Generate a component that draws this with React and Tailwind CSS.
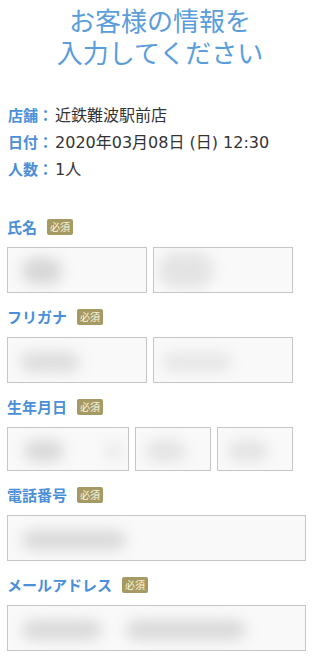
const font = { fontFamily: '"Noto Sans CJK JP", "Noto Sans", sans-serif' }
const valueFont = { fontFamily: '"DejaVu Sans", "Noto Sans CJK JP", sans-serif' }

function Badge() {
  return (
    <span className="ml-[10px] inline-flex h-4 w-[26px] items-center justify-center rounded-[2px] bg-[#a69a64] text-[10px] leading-none text-[#fdf7dc]">
      必須
    </span>
  )
}

function Label({ children }) {
  return (
    <div className="mt-[14px] flex h-5 items-center">
      <span className="text-[15px] font-bold leading-5 text-[#4a8fd8]">{children}</span>
      <Badge />
    </div>
  )
}

// blurred placeholder text inside the boxes
function Field({ width, height = "h-[46px]", blobs }) {
  return (
    <div className={`relative ${height} overflow-hidden border border-[#c6c6c6] bg-[#f9f9f9]`} style={{ width }}>
      {blobs.map((b, i) => (
        <span
          key={i}
          className="absolute rounded-full bg-[#d6d6d6] blur-[7px]"
          style={{ left: b[0], top: b[1], width: b[2], height: b[3], opacity: b[4] ?? 1 }}
        />
      ))}
    </div>
  )
}

export default function App() {
  return (
    <div className="min-h-screen bg-white px-[7px]" style={font}>
      <h1 className="pt-1 text-center text-[26px] font-normal leading-8 text-[#5a9ddb]">
        お客様の情報を
        <br />
        入力してください
      </h1>

      <div className="mt-[34px] pl-px text-[15px] leading-[26px] text-[#333]">
        <div>
          <span className="font-bold text-[#4a8fd8]">店舗：</span>
          <span className="ml-0.5 text-[16px]" style={valueFont}>近鉄難波駅前店</span>
        </div>
        <div>
          <span className="font-bold text-[#4a8fd8]">日付：</span>
          <span className="ml-0.5 text-[16px]" style={valueFont}>2020年03月08日 (日) 12:30</span>
        </div>
        <div>
          <span className="font-bold text-[#4a8fd8]">人数：</span>
          <span className="ml-0.5 text-[16px]" style={valueFont}>1人</span>
        </div>
      </div>

      <div className="mt-5 flex flex-col">
        <Label>氏名</Label>
        <div className="mt-[10px] flex gap-[6px]">
          <Field width={140} blobs={[[14, 10, 40, 26]]} />
          <Field width={140} blobs={[[4, 4, 56, 36, 0.6]]} />
        </div>

        <Label>フリガナ</Label>
        <div className="mt-[10px] flex gap-[6px]">
          <Field width={140} blobs={[[12, 14, 60, 20, 0.8]]} />
          <Field width={140} blobs={[[8, 14, 70, 20, 0.5]]} />
        </div>

        <Label>生年月日</Label>
        <div className="mt-[10px] flex gap-[6px]">
          <Field width={122} height="h-[44px]" blobs={[[16, 12, 40, 22, 0.9], [96, 14, 20, 18, 0.4]]} />
          <Field width={76} height="h-[44px]" blobs={[[10, 12, 40, 22, 0.6]]} />
          <Field width={76} height="h-[44px]" blobs={[[10, 12, 40, 22, 0.6]]} />
        </div>

        <Label>電話番号</Label>
        <div className="mt-[10px]">
          <Field width={299} blobs={[[14, 14, 104, 20, 0.9]]} />
        </div>

        <Label>メールアドレス</Label>
        <div className="mt-[10px]">
          <Field width={299} blobs={[[14, 14, 80, 20, 0.9], [118, 14, 120, 20, 0.9]]} />
        </div>
      </div>
    </div>
  )
}
